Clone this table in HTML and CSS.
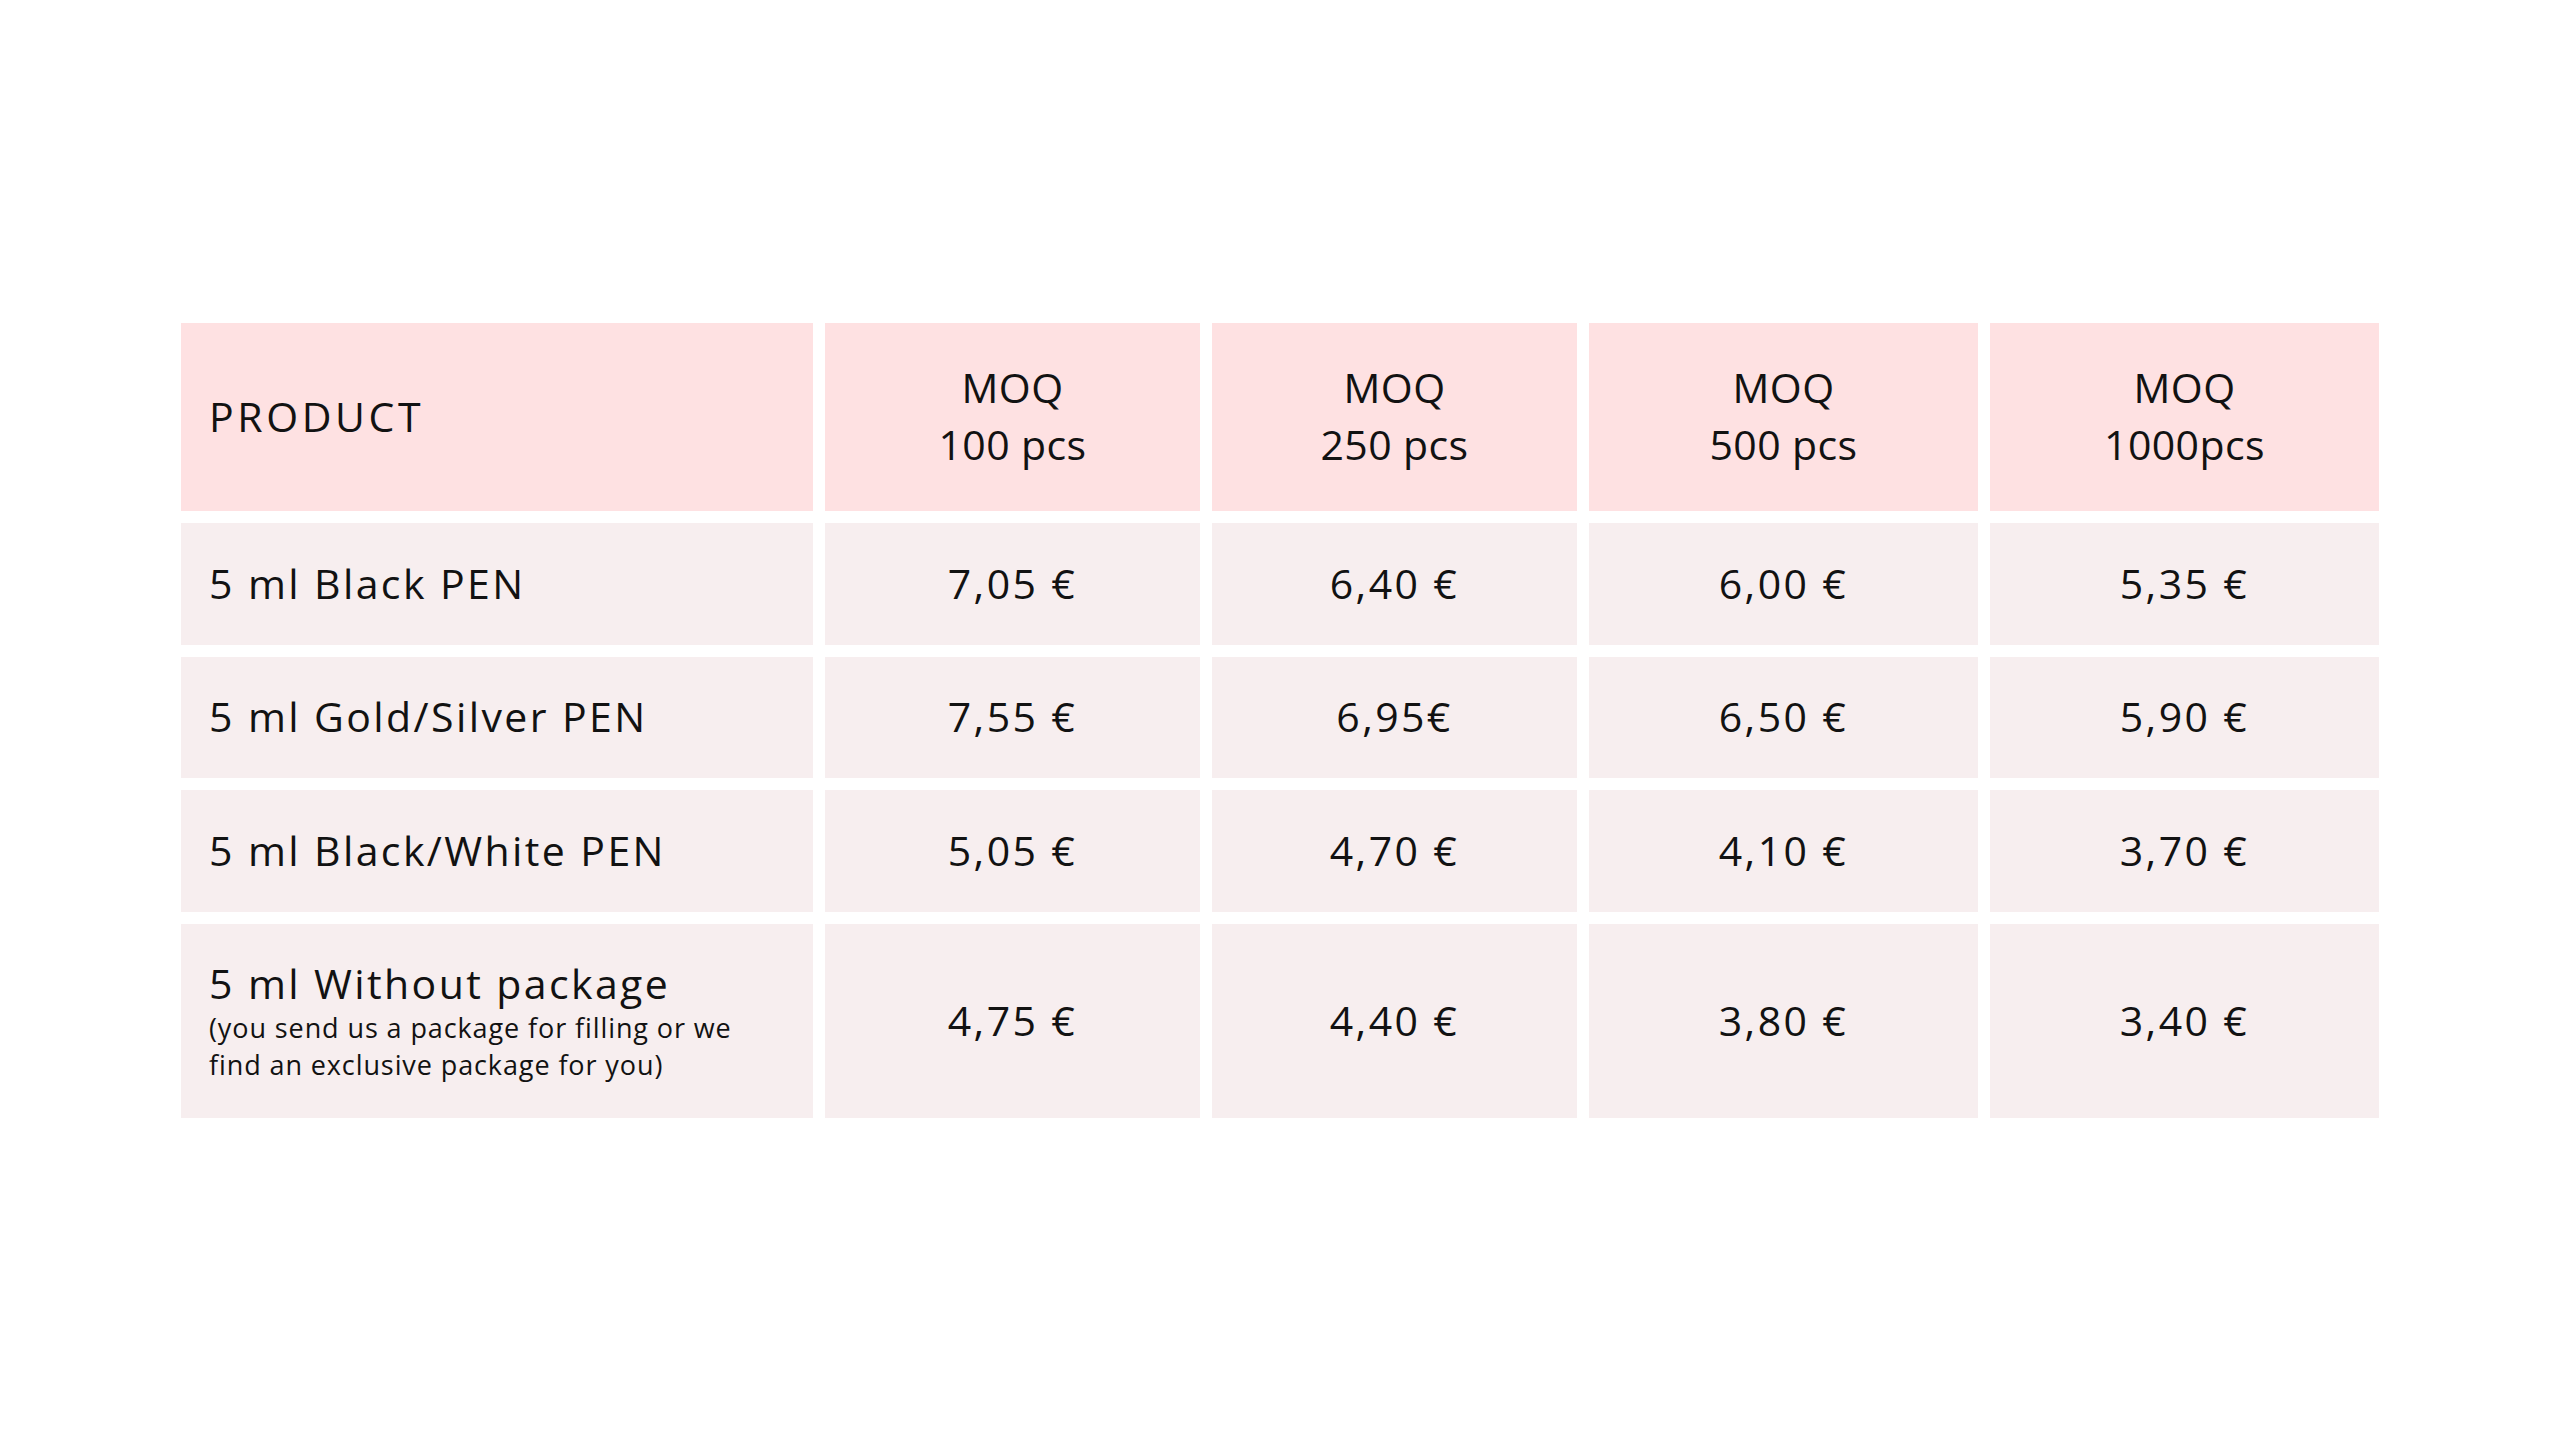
FILE: index.html
```html
<!DOCTYPE html>
<html lang="en">
<head>
<meta charset="utf-8">
<title>Price table</title>
<link rel="stylesheet" href="styles.css">
</head>
<body>
<main class="page">
  <div class="table">
    <div class="cell head first product">PRODUCT</div>
    <div class="cell head">MOQ<br>100 pcs</div>
    <div class="cell head">MOQ<br>250 pcs</div>
    <div class="cell head">MOQ<br>500 pcs</div>
    <div class="cell head">MOQ<br>1000pcs</div>

    <div class="cell first">5 ml Black PEN</div>
    <div class="cell">7,05 €</div>
    <div class="cell">6,40 €</div>
    <div class="cell">6,00 €</div>
    <div class="cell">5,35 €</div>

    <div class="cell first">5 ml Gold/Silver PEN</div>
    <div class="cell">7,55 €</div>
    <div class="cell">6,95€</div>
    <div class="cell">6,50 €</div>
    <div class="cell">5,90 €</div>

    <div class="cell first">5 ml Black/White PEN</div>
    <div class="cell">5,05 €</div>
    <div class="cell">4,70 €</div>
    <div class="cell">4,10 €</div>
    <div class="cell">3,70 €</div>

    <div class="cell first stack">
      <span class="title">5 ml Without package</span>
      <span class="note">(you send us a package for filling or we<br>find an exclusive package for you)</span>
    </div>
    <div class="cell">4,75 €</div>
    <div class="cell">4,40 €</div>
    <div class="cell">3,80 €</div>
    <div class="cell">3,40 €</div>
  </div>
</main>
</body>
</html>
```

FILE: styles.css
```css
html, body {
  margin: 0;
  padding: 0;
  background: #ffffff;
}

.page {
  width: 2560px;
  height: 1440px;
  box-sizing: border-box;
  padding: 323px 0 0 181px;
  font-family: "Open Sans", "Liberation Sans", sans-serif;
  color: #121212;
}

.table {
  display: grid;
  grid-template-columns: 632px 375px 365px 389px 389px;
  grid-template-rows: 188px 122px 121px 122px 194px;
  gap: 12px;
}

.cell {
  background: #f7eeef;
  display: flex;
  align-items: center;
  justify-content: center;
  text-align: center;
  font-size: 41px;
  line-height: 57px;
  letter-spacing: 2.4px;
  padding-bottom: 2px;
}

.cell.head {
  background: #fee1e2;
  letter-spacing: 0.4px;
}

.cell.first {
  justify-content: flex-start;
  text-align: left;
  padding-left: 28px;
}

.cell.product {
  letter-spacing: 3.6px;
}

.cell.stack {
  flex-direction: column;
  align-items: flex-start;
  justify-content: center;
}

.title {
  display: block;
  line-height: 52px;
}

.note {
  display: block;
  font-size: 27px;
  line-height: 37px;
  letter-spacing: 0.9px;
}
```
